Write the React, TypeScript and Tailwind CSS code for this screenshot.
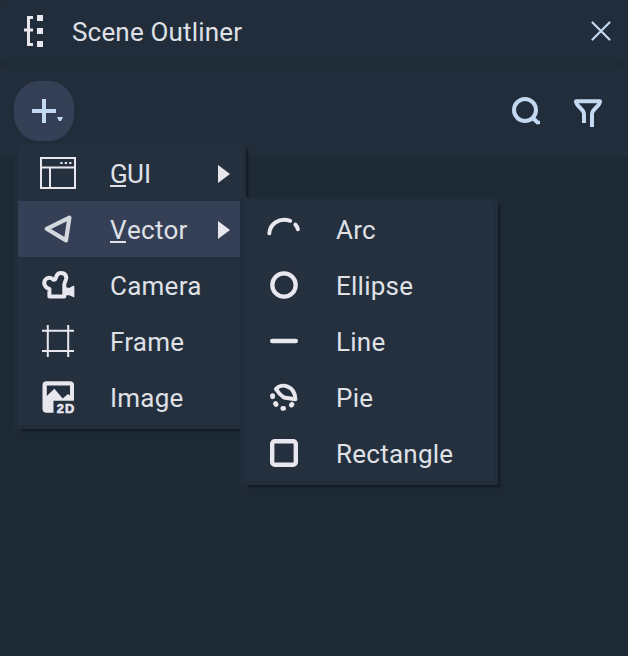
import type { ReactNode } from "react";

const light = "#e9e7ee";
const blue = "#c3d8f1";

function Icon({ children }: { children: ReactNode }) {
  return (
    <svg className="size-9 shrink-0" viewBox="0 0 36 36" fill="none" stroke={light} strokeWidth="4" strokeLinecap="round" strokeLinejoin="round">
      {children}
    </svg>
  );
}

const icons: Record<string, ReactNode> = {
  GUI: (
    <Icon>
      <g strokeLinecap="butt" strokeLinejoin="miter">
        <path d="M1 3H35V33H1Z M1 12.500H35 M10 12.500V33" strokeWidth="2" />
        <path d="M20.300 8h2.200M24.800 8h2.200M29.200 8h2.200" strokeWidth="2.200" />
      </g>
    </Icon>
  ),
  Vector: (
    <Icon>
      <path d="M6.7 17.8 29.4 6.7 26 29.4Z" stroke="#d3d8dd" strokeWidth="4.2" />
    </Icon>
  ),
  Camera: (
    <Icon>
      <path d="M9.4 29.5V22C4.6 20.6 3 16 5.2 12.900C7.4 10 11.4 10.400 13.300 12.600C15.400 13 15.700 11.700 16.200 9.800C17.600 4.800 25.600 4.700 26.300 10.500C26.500 13.500 23.700 15.600 24.300 19V29.500Z" />
      <path d="M25.500 21 29 21.800 33.600 19.500V29.400L29 27.200 25.500 27.800Z" fill={light} strokeWidth="1.500" />
    </Icon>
  ),
  Frame: (
    <Icon>
      <path d="M7.8 2V34M28.2 2V34M2 7.8H34M2 28H34" strokeWidth="2" strokeLinecap="butt" />
    </Icon>
  ),
  Image: (
    <Icon>
      <path fillRule="evenodd" stroke="none" fill={light} d="M6.500 2.200H30a4 4 0 0 1 4 4V21.800H13.500V33.800H6.500a4 4 0 0 1-4-4V6.200a4 4 0 0 1 4-4ZM6.800 6.600V17L14.400 9.800 22.700 19.400 28 15 30 16.400V6.600Z" />
      <text x="16.700" y="33.500" fontSize="12.800" fontWeight="700" fontFamily="'Liberation Sans', sans-serif" fill={light} stroke={light} strokeWidth=".6" textLength="17.600">2D</text>
    </Icon>
  ),
  Arc: (
    <Icon>
      <path d="M3.300 22.300C4 13 13 6.200 24.200 9.800M29.400 13.600Q31.200 15.600 31.900 18.200" />
    </Icon>
  ),
  Ellipse: (
    <Icon>
      <circle cx="18" cy="18" r="11.7" strokeWidth="4.3" />
    </Icon>
  ),
  Line: (
    <Icon>
      <path d="M6.3 18H29.7" strokeWidth="4.6" />
    </Icon>
  ),
  Pie: (
    <Icon>
      <path d="M9.900 10C15.500 3.500 29 6.500 29.400 20.200L17.800 18.400Q13.500 15.500 9.900 10Z" />
      <path d="M6.600 16.600V17.800M9.500 24.700 10.100 25.400M16.800 29.400H17.600M25.400 26 26 25.400" strokeWidth="4.900" />
    </Icon>
  ),
  Rectangle: (
    <Icon>
      <rect x="6.2" y="6.2" width="23.6" height="23.6" rx="2.500" strokeWidth="4.400" />
    </Icon>
  ),
};

function MenuRow({ label, submenu, active }: { label: string; submenu?: boolean; active?: boolean }) {
  return (
    <li className={`flex h-14 items-center pl-[22px] pr-3 ${active ? "bg-[#354057]" : ""}`}>
      {icons[label]}
      <span className="ml-[34px] grow whitespace-nowrap pt-0.5 tracking-[0.25px]">
        {submenu ? (
          <>
            <span className="inline-block h-[26px] w-[17px] align-top leading-[26px] shadow-[inset_-1px_0_0_transparent]">
              <span className="block h-[26px] w-4 border-b-2 border-[#e0e2e6]">{label[0]}</span>
            </span>
            <span className="inline-block align-top leading-[26px]">{label.slice(1)}</span>
          </>
        ) : (
          label
        )}
      </span>
      {submenu && (
        <svg className="mt-0.5 h-[18px] w-3" viewBox="0 0 12 18" fill={light}>
          <path d="M0 0 12 9 0 18Z" />
        </svg>
      )}
    </li>
  );
}

export default function App() {
  return (
    <div className="relative flex h-[656px] w-[628px] flex-col overflow-hidden bg-[#1e2936] font-['Roboto',sans-serif] text-[26px] leading-[26px] text-[#dfe1e6]">
      <header className="mb-0.5 flex h-[63px] items-center rounded-md bg-[#222d3c] pb-px pl-6 pr-[17px]">
        <svg className="h-8 w-5" viewBox="0 0 20 32" fill={light}>
          <path d="M13 0h6v6h-6zM13 13h6v6h-6zM13 26h6v6h-6zM3 1h6v3H6v9.500h3v3H6V28h3v3H3V16.500H0v-3h3z" />
        </svg>
        <h1 className="ml-7 grow pt-0.5 tracking-[0.18px]">Scene Outliner</h1>
        <svg className="size-5" viewBox="0 0 20 20" stroke={blue} strokeWidth="2.200" strokeLinecap="round">
          <path d="M1.500 1.500 18.500 18.500M18.500 1.500 1.500 18.500" />
        </svg>
      </header>

      <div className="flex h-[92px] items-center rounded-t-md bg-[#222d3c] pl-3.5 pr-6">
        <button className="flex size-[60px] items-center justify-center rounded-[26px] bg-[#354057]">
          <svg className="size-[60px]" viewBox="0 0 60 60" fill={blue}>
            <path d="M28 18h4v10h10v4H32v10h-4V32H18v-4h10zM43 36h6l-2 4h-2z" />
          </svg>
        </button>
        <div className="ml-auto flex items-center gap-[30px]">
          <svg className="size-8" viewBox="0 0 32 32" fill="none" stroke={blue} strokeWidth="4">
            <circle cx="15" cy="15" r="11" />
            <path d="M22.500 22.500 27 27" />
            <path d="M26 27.500H30" strokeWidth="3.500" />
          </svg>
          <svg className="size-8" viewBox="0 0 32 32" fill="none" stroke={blue} strokeWidth="4" strokeLinejoin="round">
            <path d="M12 28V19C12 14 4 11.500 4 6.200H28C28 11.500 20 14 20 19V32" />
          </svg>
        </div>
      </div>

      <ul className="absolute left-3.5 top-[141px] w-[232px] border-4 border-[#222d3c] bg-[#25303f] shadow-[5px_5px_2px_-3px_#111923]">
        <MenuRow label="GUI" submenu />
        <MenuRow label="Vector" submenu active />
        <MenuRow label="Camera" />
        <MenuRow label="Frame" />
        <MenuRow label="Image" />
      </ul>

      <ul className="absolute left-60 top-[197px] w-[258px] border-4 border-[#222d3c] bg-[#25303f] shadow-[5px_5px_2px_-3px_#111923]">
        <MenuRow label="Arc" />
        <MenuRow label="Ellipse" />
        <MenuRow label="Line" />
        <MenuRow label="Pie" />
        <MenuRow label="Rectangle" />
      </ul>
    </div>
  );
}
